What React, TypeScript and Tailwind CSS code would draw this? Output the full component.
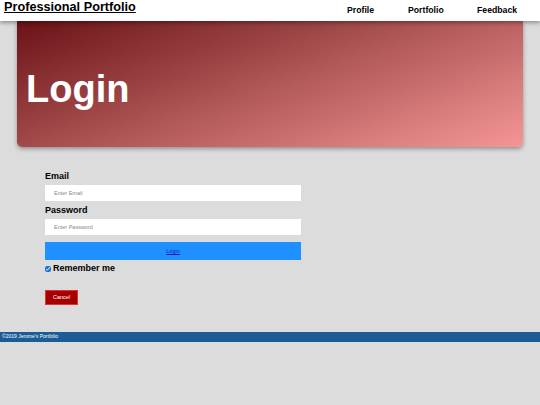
export default function App() {
  return (
    <div className="min-h-[405px] bg-[#dcdcdc] font-['Liberation_Sans',Arial,sans-serif]">
      <header className="relative z-10 flex h-[21px] items-start justify-between bg-white shadow-[0_2px_4px_rgba(0,0,0,0.35)]">
        <a href="#" className="ml-[4px] mt-[-1px] text-[12.7px] font-bold leading-[16px] text-black underline">
          Professional Portfolio
        </a>
        <nav className="mt-[5px] flex text-[8.7px] font-bold leading-[11px] text-black">
          <span className="w-[61px]">Profile</span>
          <span className="w-[69px]">Portfolio</span>
          <span className="w-[63px]">Feedback</span>
        </nav>
      </header>

      <section className="mx-[17px] flex h-[126px] items-center rounded-b-[5px] bg-[linear-gradient(160deg,#6a1216_0%,#a85050_45%,#f59696_100%)] pl-[9px] shadow-[0_2px_4px_rgba(0,0,0,0.35)]">
        <h1 className="mt-[10px] text-[38px] font-bold leading-none text-white">Login</h1>
      </section>

      <form className="ml-[45px] mt-[24px] w-[256px]" onSubmit={(e) => e.preventDefault()}>
        <label className="block text-[9px] font-bold leading-[11px] text-black">Email</label>
        <input
          type="text"
          placeholder="Enter Email"
          className="mt-[3px] block h-[16px] w-full bg-white px-[9px] text-[5.5px] outline-none placeholder:text-[#888]"
        />
        <label className="mt-[4px] block text-[9px] font-bold leading-[11px] text-black">Password</label>
        <input
          type="password"
          placeholder="Enter Password"
          className="mt-[3px] block h-[16px] w-full bg-white px-[9px] text-[5.5px] outline-none placeholder:text-[#888]"
        />
        <button
          type="submit"
          className="mt-[7px] block h-[18px] w-full bg-[#1e90ff] text-[5.5px] text-[#1515c8] underline"
        >
          Login
        </button>
        <label className="mt-[3px] flex items-center gap-[2px] text-[9px] font-bold leading-[11px] text-black">
          <input type="checkbox" defaultChecked className="h-[6px] w-[6px] accent-[#1e6fd0]" />
          Remember me
        </label>
        <button
          type="button"
          className="mt-[16px] block h-[15px] w-[33px] border border-[#d33] bg-[#a50000] text-[5.5px] text-white"
        >
          Cancel
        </button>
      </form>

      <footer className="mt-[27px] flex h-[10px] items-center bg-[#1b5c96] pl-[2px] text-[5px] text-white">
        ©2019 Jerome's Portfolio
      </footer>
    </div>
  );
}
